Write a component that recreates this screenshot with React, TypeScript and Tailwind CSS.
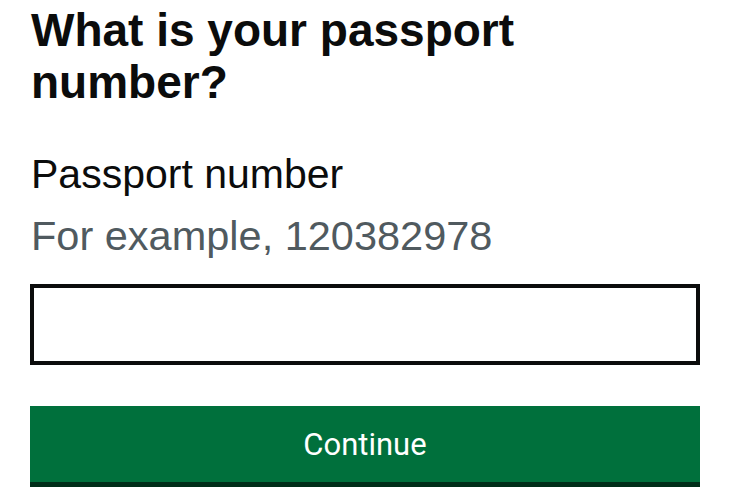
export default function App() {
  return (
    <div className="min-h-screen bg-white px-[30px] pt-[4px]">
      <h1 className="text-[46px] leading-[52px] font-bold text-[#0b0c0c] font-['Liberation_Sans',Arial,sans-serif] pl-[1px]">
        What is your passport
        <br />
        number?
      </h1>

      <form className="mt-[42px]" onSubmit={(e) => e.preventDefault()}>
        <label
          htmlFor="passport-number"
          className="block text-[41px] leading-[48px] text-[#0b0c0c] font-['Liberation_Sans',Arial,sans-serif] pl-[1px]"
        >
          Passport number
        </label>
        <div className="mt-[14px] text-[41.5px] leading-[48px] text-[#505a5f] font-['Liberation_Sans',Arial,sans-serif] pl-[1px]">
          For example, 120382978
        </div>

        <input
          id="passport-number"
          type="text"
          className="mt-[24px] block w-full h-[81px] border-4 border-[#0b0c0c] bg-white px-3 text-[40px] outline-none font-['Liberation_Sans',Arial,sans-serif]"
        />

        <button
          type="submit"
          className="mt-[41px] flex w-full h-[76px] items-center justify-center bg-[#00703c] pt-[2px] text-[31px] text-white shadow-[0_5px_0_#002d18] font-['Roboto',Arial,sans-serif]"
        >
          Continue
        </button>
      </form>
    </div>
  );
}
